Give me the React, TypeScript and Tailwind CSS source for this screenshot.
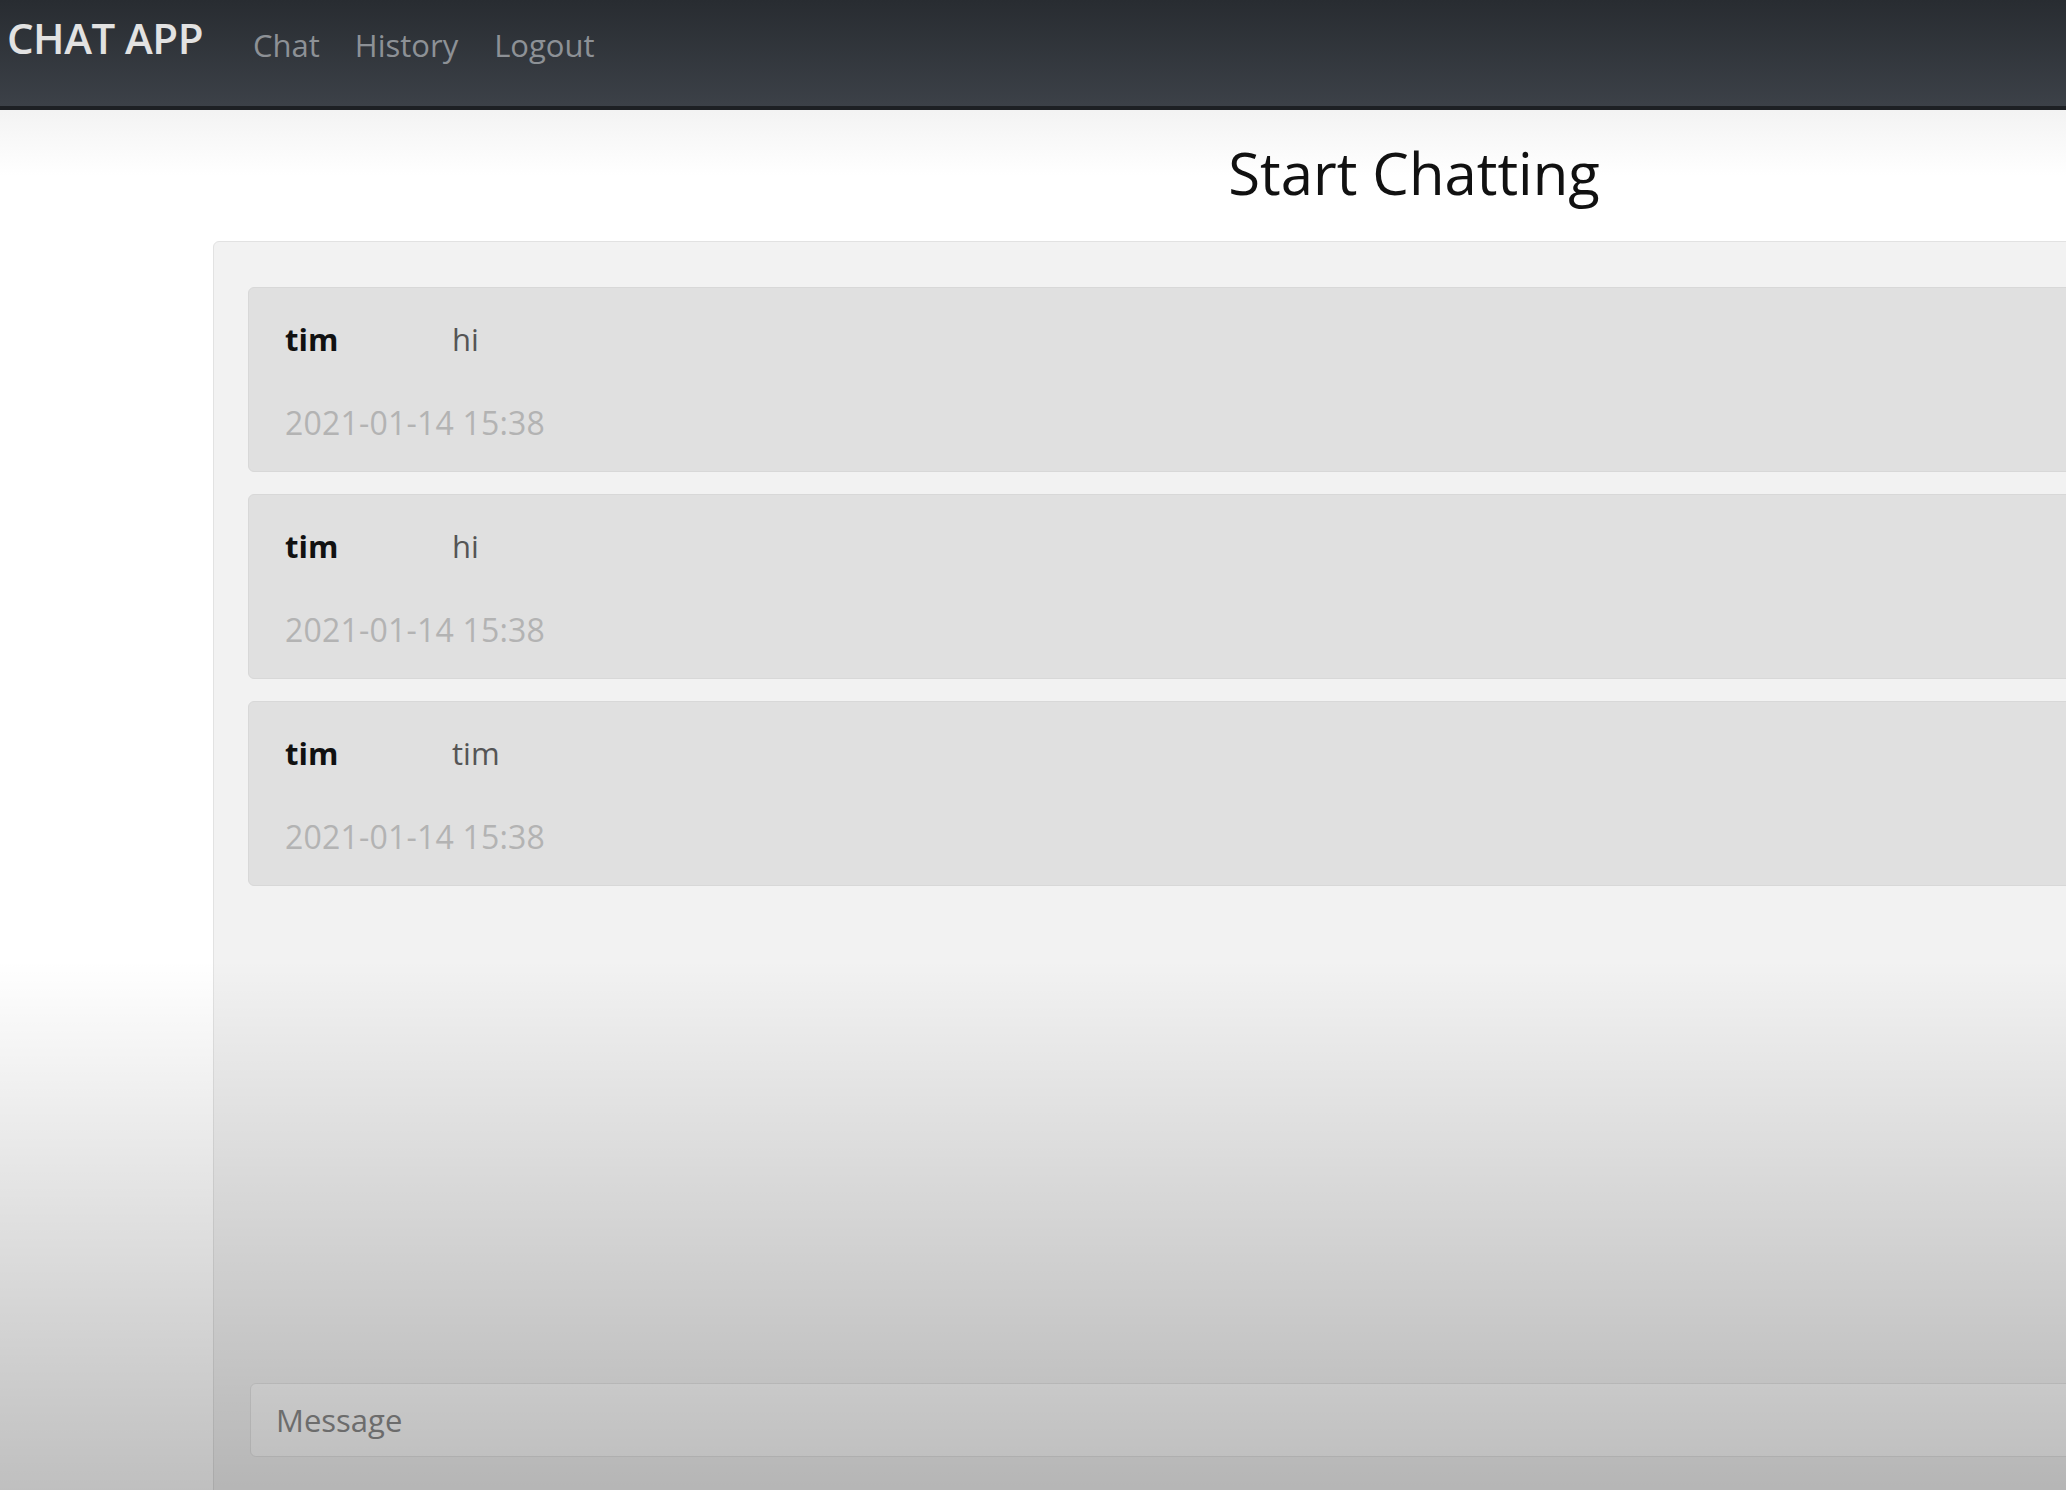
import React from 'react';

type Message = { user: string; text: string; time: string };

const messages: Message[] = [
  { user: 'tim', text: 'hi', time: '2021-01-14 15:38' },
  { user: 'tim', text: 'hi', time: '2021-01-14 15:38' },
  { user: 'tim', text: 'tim', time: '2021-01-14 15:38' },
];

function MessageCard({ msg }: { msg: Message }) {
  return (
    <div className="bg-[#e0e0e0] border border-[#d8d8d8] rounded-[6px] pl-[36px] pt-[29px] pb-[26px] flex flex-col gap-[40px]">
      <div className="flex items-center h-[44px] text-[31px]">
        <span className="w-[167px] font-bold text-[#111]">{msg.user}</span>
        <span className="text-[#555]">{msg.text}</span>
      </div>
      <div className="h-[44px] flex items-center text-[32px] text-[#b3b3b3] tracking-[0.2px]">{msg.time}</div>
    </div>
  );
}

export default function App() {
  return (
    <div className="relative w-[2066px] h-[1490px] overflow-hidden bg-white font-['Open_Sans',sans-serif]">
      {/* Navbar */}
      <nav className="h-[110px] bg-gradient-to-b from-[#282c31] to-[#3c4148] border-b-[4px] border-[#1d2024] flex items-center pl-[7px] pb-[32px]">
        <span className="text-[42px] font-semibold text-[#e2e2e2] tracking-[-0.5px]">CHAT APP</span>
        <div className="flex items-center ml-[33px] pt-[16px]">
          <a className="px-[17px] text-[31px] text-[#8d9196]">Chat</a>
          <a className="pl-[18px] pr-[19px] text-[31px] text-[#8d9196]">History</a>
          <a className="px-[17px] text-[31px] text-[#8d9196]">Logout</a>
        </div>
      </nav>

      {/* Title */}
      <div className="h-[131px] bg-gradient-to-b from-[#f3f3f3] via-white to-white pl-[213px]">
        <div className="w-[2402px] h-full flex items-center justify-center pb-[6px]">
          <h1 className="text-[58px] text-[#111]">Start Chatting</h1>
        </div>
      </div>

      {/* Chat panel */}
      <div className="pl-[213px]">
        <div className="w-[2402px] h-[1300px] bg-[#f2f2f2] border border-[#e2e2e2] rounded-[6px] pl-[34px] pr-[34px] pt-[45px]">
          <div className="h-[1076px] flex flex-col gap-[22px]">
            {messages.map((m, i) => (
              <MessageCard key={i} msg={m} />
            ))}
          </div>
          <input
            placeholder="Message"
            className="mt-[20px] ml-[2px] w-full h-[74px] bg-[#fbfbfb] border border-[#e4e4e4] rounded-[6px] px-[25px] text-[31px] text-[#333] placeholder:text-[#8a8a8a] outline-none"
          />
        </div>
      </div>

      {/* video vignette */}
      <div className="pointer-events-none absolute inset-x-0 top-[960px] bottom-0 bg-gradient-to-b from-transparent to-black/25" />
    </div>
  );
}
